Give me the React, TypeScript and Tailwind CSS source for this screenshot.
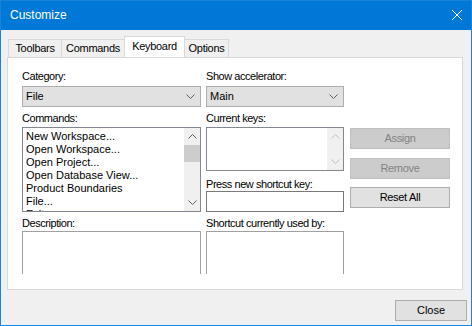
import React from 'react';

const Chevron = ({ up = false, color = '#606060' }: { up?: boolean; color?: string }) => (
  <svg width="9" height="5" viewBox="0 0 9 5" className="block">
    <path
      d={up ? 'M0.5 4.5 L4.5 0.5 L8.5 4.5' : 'M0.5 0.5 L4.5 4.5 L8.5 0.5'}
      stroke={color}
      strokeWidth="1"
      fill="none"
    />
  </svg>
);

const Label = ({ text, className = '' }: { text: string; className?: string }) => (
  <div className={`h-[13px] leading-[13px] text-[11px] tracking-[-0.45px] text-black whitespace-nowrap ${className}`}>
    {text}
  </div>
);

const Combo = ({ value, width }: { value: string; width: string }) => (
  <div className={`${width} h-[21px] mt-[3px] bg-[#e1e1e1] border border-[#adadad] flex items-center justify-between pl-[3px] pr-[5px]`}>
    <span className="text-[11px] leading-[13px]">{value}</span>
    <Chevron />
  </div>
);

const Button = ({ text, disabled = false, className = '' }: { text: string; disabled?: boolean; className?: string }) => (
  <div
    className={`h-[21px] flex items-center justify-center text-[11px] tracking-[-0.3px] border ${
      disabled ? 'bg-[#cccccc] border-[#bfbfbf] text-[#838383]' : 'bg-[#e1e1e1] border-[#adadad] text-black'
    } ${className}`}
  >
    {text}
  </div>
);

const Tab = ({ text, width, selected = false }: { text: string; width: string; selected?: boolean }) => (
  <div
    className={`${width} flex items-center justify-center text-[11px] tracking-[-0.3px] border border-[#d9d9d9] ${
      selected ? 'h-[21px] bg-white border-b-0 relative z-10 pb-[2px]' : 'h-[18px] bg-[#f0f0f0] border-b-0 -ml-px'
    }`}
  >
    {text}
  </div>
);

const commands = [
  'New Workspace...',
  'Open Workspace...',
  'Open Project...',
  'Open Database View...',
  'Product Boundaries',
  'File...',
  'Exit',
];

export default function App() {
  return (
    <div className="w-[472px] h-[326px] flex flex-col bg-[#f0f0f0] border border-[#1883d7] font-['Liberation_Sans',Arial,sans-serif] text-black overflow-hidden">
      {/* title bar */}
      <div className="h-[30px] -mt-px bg-[#0078d7] flex items-center justify-between pl-[9px] pr-[9px] shrink-0">
        <span className="text-white text-[12px] leading-none">Customize</span>
        <svg width="10" height="10" viewBox="0 0 10 10" className="block">
          <path d="M0 0 L10 10 M10 0 L0 10" stroke="#ffffff" strokeWidth="1" />
        </svg>
      </div>

      {/* tabs */}
      <div className="flex items-end pl-[7px] mt-[7px] h-[20px] relative z-10">
        <Tab text="Toolbars" width="w-[54px] !ml-0" />
        <Tab text="Commands" width="w-[64px]" />
        <Tab text="Keyboard" width="w-[61px] -ml-px" selected />
        <Tab text="Options" width="w-[45px]" />
      </div>

      {/* panel */}
      <div className="ml-[6px] w-[456px] h-[233px] bg-white border border-[#d9d9d9] flex pt-[12px] pl-[14px] overflow-hidden">
        {/* left column */}
        <div className="w-[179px] flex flex-col">
          <Label text="Category:" />
          <Combo value="File" width="w-[179px]" />
          <Label text="Commands:" className="mt-[5px]" />
          <div className="mt-[2px] h-[85px] border border-[#828790] flex">
            <div className="flex-1 pl-[3px] pt-[2px] overflow-hidden">
              {commands.map((c) => (
                <div key={c} className="h-[13px] leading-[13px] text-[11px] whitespace-nowrap">
                  {c}
                </div>
              ))}
            </div>
            <div className="w-[16px] bg-[#f0f0f0] flex flex-col items-center">
              <div className="h-[17px] flex items-center justify-center">
                <Chevron up />
              </div>
              <div className="w-[16px] h-[17px] bg-[#cdcdcd]" />
              <div className="flex-1" />
              <div className="h-[17px] flex items-center justify-center">
                <Chevron />
              </div>
            </div>
          </div>
          <Label text="Description:" className="mt-[5px]" />
          <div className="mt-[1px] h-[43px] border border-b-0 border-[#a0a0a0]" />
        </div>

        {/* middle column */}
        <div className="w-[138px] ml-[5px] flex flex-col">
          <Label text="Show accelerator:" />
          <Combo value="Main" width="w-[138px]" />
          <Label text="Current keys:" className="mt-[5px]" />
          <div className="mt-[2px] h-[44px] border border-[#828790] flex">
            <div className="flex-1" />
            <div className="w-[16px] bg-[#f0f0f0] flex flex-col justify-between">
              <div className="h-[17px] flex items-center justify-center">
                <Chevron up color="#c0c0c0" />
              </div>
              <div className="h-[17px] flex items-center justify-center">
                <Chevron color="#c0c0c0" />
              </div>
            </div>
          </div>
          <Label text="Press new shortcut key:" className="mt-[7px]" />
          <div className="h-[21px] border border-[#7a7a7a]" />
          <Label text="Shortcut currently used by:" className="mt-[5px]" />
          <div className="mt-[1px] h-[43px] border border-b-0 border-[#a0a0a0]" />
        </div>

        {/* buttons */}
        <div className="w-[100px] ml-[6px] flex flex-col pt-[58px]">
          <Button text="Assign" disabled />
          <Button text="Remove" disabled className="mt-[9px]" />
          <Button text="Reset All" className="mt-[8px]" />
        </div>
      </div>

      {/* footer */}
      <div className="flex justify-end pr-[4px] mt-[10px]">
        <Button text="Close" className="w-[72px] tracking-normal" />
      </div>
    </div>
  );
}
